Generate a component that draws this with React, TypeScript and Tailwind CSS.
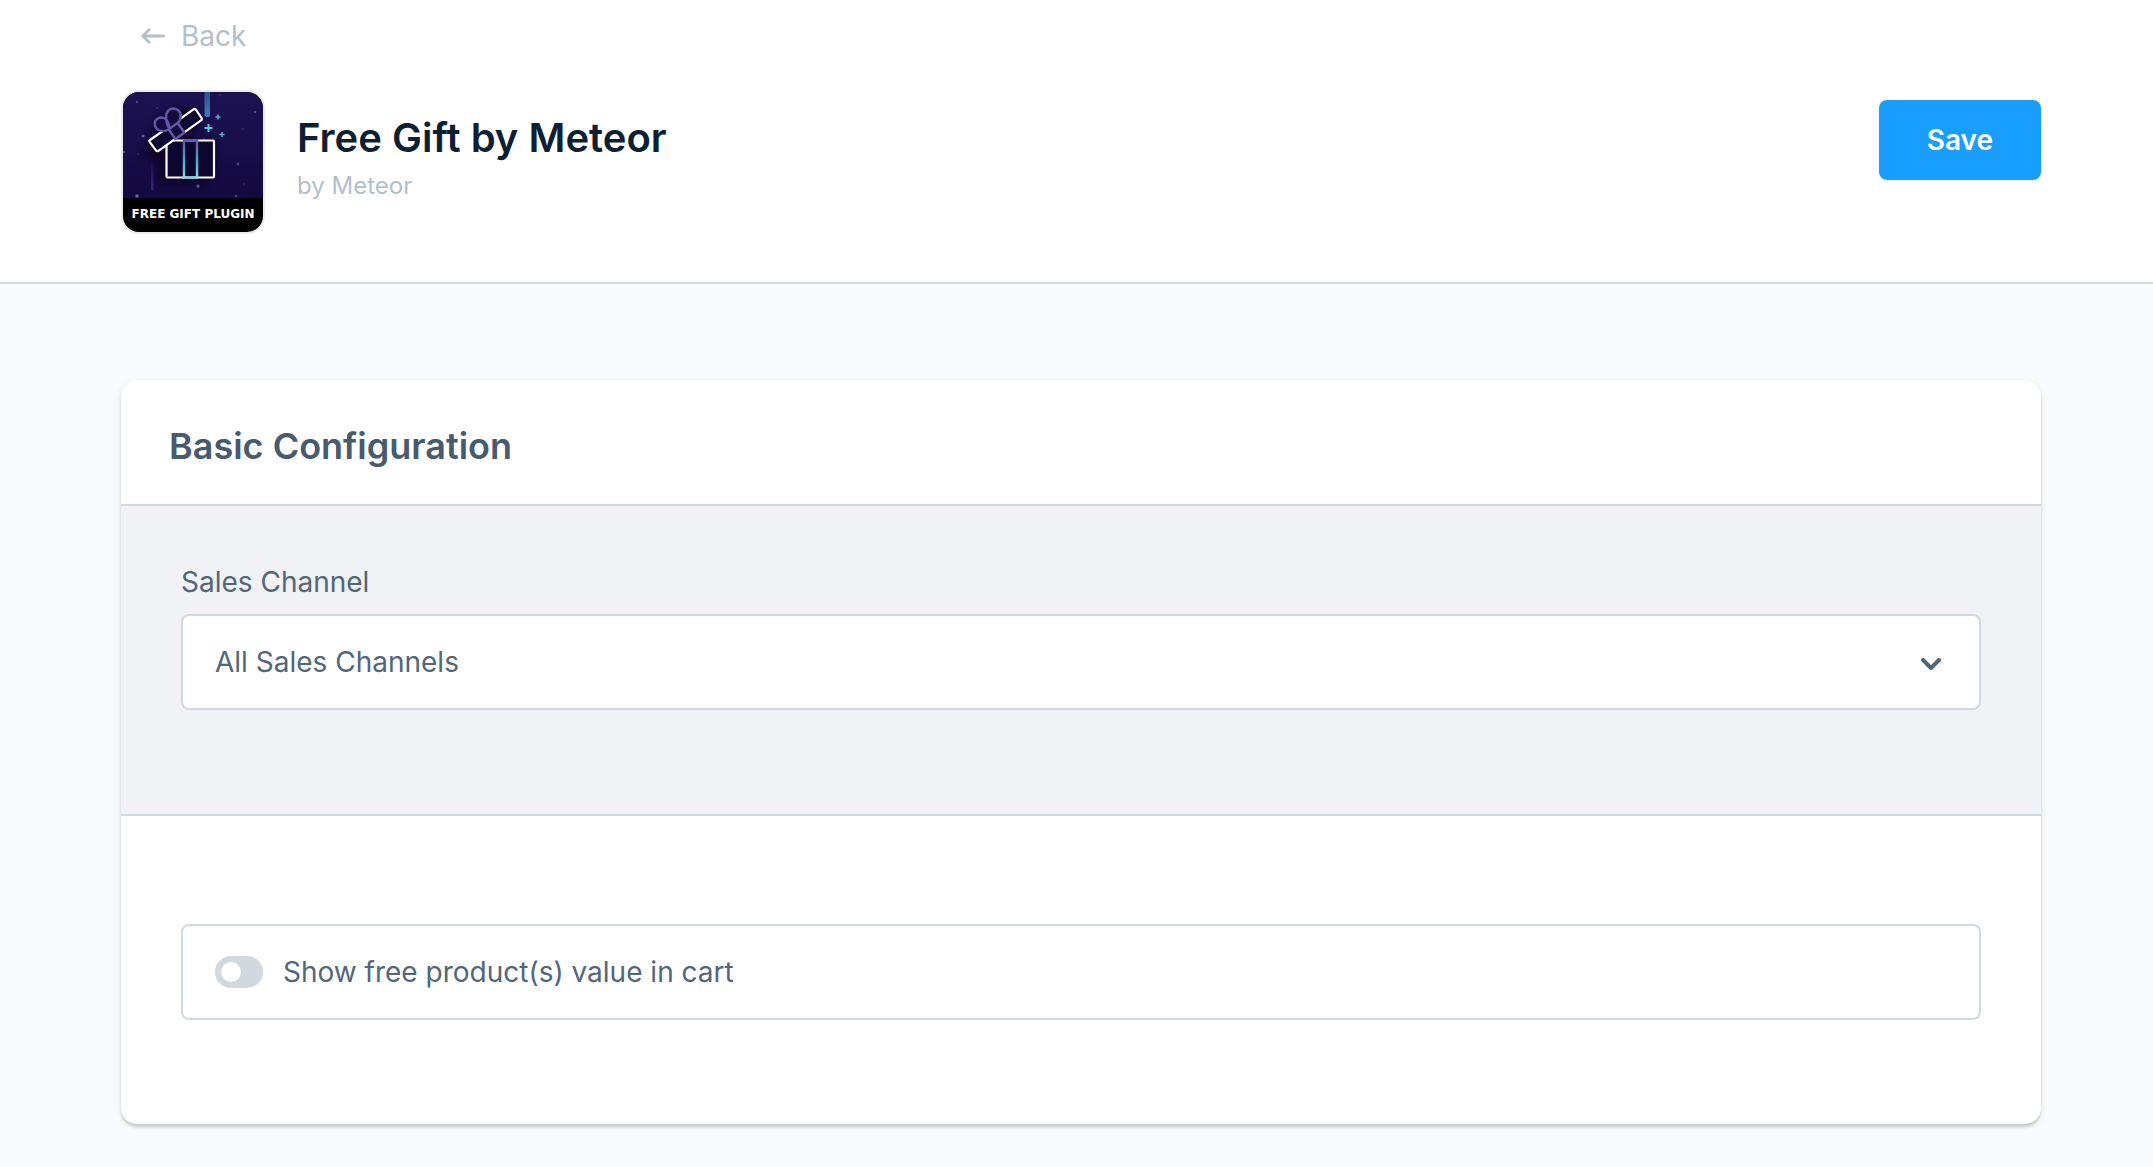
import { useState } from "react";

function BackArrowIcon() {
  return (
    <svg width="24" height="16" viewBox="0 0 24 16" fill="none" aria-hidden="true">
      <path
        d="M22.5 8H2.5M8 1.8L1.8 8L8 14.200"
        stroke="currentColor"
        strokeWidth="2.8"
        strokeLinecap="round"
        strokeLinejoin="round"
      />
    </svg>
  );
}

function ChevronDownIcon() {
  return (
    <svg width="20" height="12" viewBox="0 0 20 12" fill="none" aria-hidden="true">
      <path
        d="M2 2L10 10L18 2"
        stroke="currentColor"
        strokeWidth="4"
        strokeLinecap="round"
        strokeLinejoin="round"
      />
    </svg>
  );
}

const stars = [
  { x: 14, y: 10, r: 1.2, o: 0.35 },
  { x: 34, y: 16, r: 1, o: 0.2 },
  { x: 97, y: 3, r: 1, o: 0.25 },
  { x: 132, y: 20, r: 1.3, o: 0.35 },
  { x: 120, y: 37, r: 1, o: 0.2 },
  { x: 20, y: 44, r: 1.6, o: 0.5 },
  { x: 1, y: 60, r: 1.2, o: 0.4 },
  { x: 15, y: 62, r: 1, o: 0.2 },
  { x: 51, y: 67, r: 1, o: 0.3 },
  { x: 81, y: 47, r: 1.2, o: 0.3 },
  { x: 115, y: 72, r: 1.4, o: 0.35 },
  { x: 121, y: 92, r: 1, o: 0.2 },
  { x: 75, y: 94, r: 1.7, o: 0.6 },
  { x: 14, y: 104, r: 1.7, o: 0.6 },
  { x: 113, y: 104, r: 1.3, o: 0.35 },
];

function GiftArtwork() {
  return (
    <svg width="140" height="106" viewBox="0 0 140 106" fill="none" aria-hidden="true" className="block">
      <defs>
        <linearGradient id="sky" x1="0" y1="0" x2="0" y2="1">
          <stop offset="0" stopColor="#1c1252" />
          <stop offset="1" stopColor="#140a40" />
        </linearGradient>
        <linearGradient id="ribbon" x1="0" y1="48" x2="0" y2="86" gradientUnits="userSpaceOnUse">
          <stop offset="0" stopColor="#5c55a6" />
          <stop offset="0.6" stopColor="#4fb4d2" />
          <stop offset="1" stopColor="#8fd6e4" />
        </linearGradient>
        <linearGradient id="comet" x1="0" y1="0" x2="0" y2="1">
          <stop offset="0" stopColor="#2c4c8c" />
          <stop offset="1" stopColor="#427cb8" />
        </linearGradient>
        <linearGradient id="trail" x1="0" y1="0" x2="0" y2="1">
          <stop offset="0" stopColor="#3a2585" stopOpacity="0" />
          <stop offset="1" stopColor="#3a2585" />
        </linearGradient>
        <filter id="soft" x="-20%" y="-20%" width="140%" height="140%">
          <feGaussianBlur stdDeviation="3" />
        </filter>
      </defs>
      <rect width="140" height="106" fill="url(#sky)" />
      {stars.map((star) => (
        <circle key={`${star.x}-${star.y}`} cx={star.x} cy={star.y} r={star.r} fill="#aaa4c8" opacity={star.o} />
      ))}
      <rect x="81.5" y="-2" width="5.5" height="27" rx="2" fill="url(#comet)" />
      <rect x="28" y="68" width="2.5" height="30" rx="1" fill="url(#trail)" />
      <path
        d="M26 49L20 62L36 74L34 92L82 92L92 80V48H66L79 27L70 17L50 14L32 30Z"
        fill="#080320"
        opacity="0.7"
        filter="url(#soft)"
      />
      <rect x="43.5" y="48.5" width="47.5" height="37" rx="1" fill="#0d0630" stroke="#fff" strokeWidth="2.2" />
      <path d="M61 48.5V85.5H74V48.5Z" stroke="url(#ribbon)" strokeWidth="2.4" />
      <path
        d="M27 48L70.5 17.4Q72 16.4 73 17.8L78.6 26Q79.4 27.4 78 28.4L35.5 58.8Q34 59.8 33 58.4L26.7 50Q25.8 48.8 27 48Z"
        fill="#0d0630"
        stroke="#fff"
        strokeWidth="2.2"
      />
      <path
        d="M45.500 37.500C42 40 36 39.500 33.500 36.500C30 32 32 26 38 25.500C43 25.500 46 30 46.500 36.500C42 30 42 21 46 18C50 14.500 57 17.500 57.500 22.500C58 26 57 29 54.500 31"
        fill="#140a40"
        stroke="#6158a8"
        strokeWidth="2.4"
        strokeLinejoin="round"
      />
      <path
        d="M45.500 37.500L54.500 31L61.500 40.500L52.500 47Z"
        fill="#140a40"
        stroke="#6158a8"
        strokeWidth="2.4"
        strokeLinejoin="round"
      />
      <path d="M85.5 32V40M81.5 36H89.5" stroke="#62c4dc" strokeWidth="2" />
      <path d="M95 22.500V27.500M92.500 25H97.500M99 40V45M96.500 42.500H101.500" stroke="#4fa9c8" strokeWidth="1.6" />
    </svg>
  );
}

export default function App() {
  const [showValue, setShowValue] = useState(false);
  const [channel, setChannel] = useState("all");

  return (
    <div className="min-h-screen bg-[#f9fafb] font-['Inter',sans-serif] text-[28px] leading-8 text-[#52667a]">
      <header className="border-b-2 border-[#d1d9e0] bg-white pt-5 pr-28 pb-12 pl-[121px]">
        <a href="#" className="ml-5 flex w-fit items-center gap-4 text-[#b3bfcc]">
          <BackArrowIcon />
          Back
        </a>
        <div className="mt-[38px] flex items-start gap-8">
          <div className="shrink-0 overflow-hidden rounded-[18px] border-2 border-[#ebebeb] bg-black">
            <GiftArtwork />
            <p className="h-[34px] text-center font-['DejaVu_Sans',sans-serif] text-xs leading-8 font-bold whitespace-nowrap text-white">
              FREE GIFT PLUGIN
            </p>
          </div>
          <div className="flex-1 pt-6">
            <h1 className="text-[40px] leading-12 font-semibold text-[#0d1f33]">Free Gift by Meteor</h1>
            <p className="mt-2 text-2xl text-[#b3bfcc]">by Meteor</p>
          </div>
          <button
            type="button"
            className="mt-2.5 h-20 rounded-lg bg-[#189eff] px-12 font-semibold text-white hover:bg-[#0089e6]"
          >
            Save
          </button>
        </div>
      </header>

      <main className="pt-24 pr-28 pb-10 pl-[121px]">
        <section className="overflow-hidden rounded-2xl bg-white shadow-[0_2px_2px_rgba(0,0,0,0.08),0_4px_2px_rgba(0,0,0,0.06),0_2px_6px_rgba(0,0,0,0.1)]">
          <h2 className="border-b-2 border-[#d1d9e0] px-12 pt-11 pb-9 text-4xl leading-11 font-semibold text-[#475a6e]">
            Basic Configuration
          </h2>

          <div className="border-b-2 border-[#d1d9e0] bg-[#f0f2f5] px-[60px] pt-[60px] pb-[104px]">
            <label htmlFor="sales-channel" className="block">
              Sales Channel
            </label>
            <div className="relative mt-4">
              <select
                id="sales-channel"
                value={channel}
                onChange={(event) => {
                  setChannel(event.target.value);
                }}
                className="block h-24 w-full appearance-none rounded-lg border-2 border-[#d1d9e0] bg-white px-8"
              >
                <option value="all">All Sales Channels</option>
              </select>
              <span className="pointer-events-none absolute inset-y-0 right-10 flex items-center pt-1">
                <ChevronDownIcon />
              </span>
            </div>
          </div>

          <div className="px-[60px] pt-[108px] pb-[104px]">
            <label className="flex h-24 items-center gap-5 rounded-lg border-2 border-[#d1d9e0] px-8">
              <input
                type="checkbox"
                role="switch"
                checked={showValue}
                onChange={(event) => {
                  setShowValue(event.target.checked);
                }}
                className="flex h-8 w-12 shrink-0 appearance-none items-center rounded-full bg-[#d1d9e0] px-1.5 before:size-5 before:rounded-full before:bg-white checked:justify-end checked:bg-[#189eff]"
              />
              Show free product(s) value in cart
            </label>
          </div>
        </section>
      </main>
    </div>
  );
}
